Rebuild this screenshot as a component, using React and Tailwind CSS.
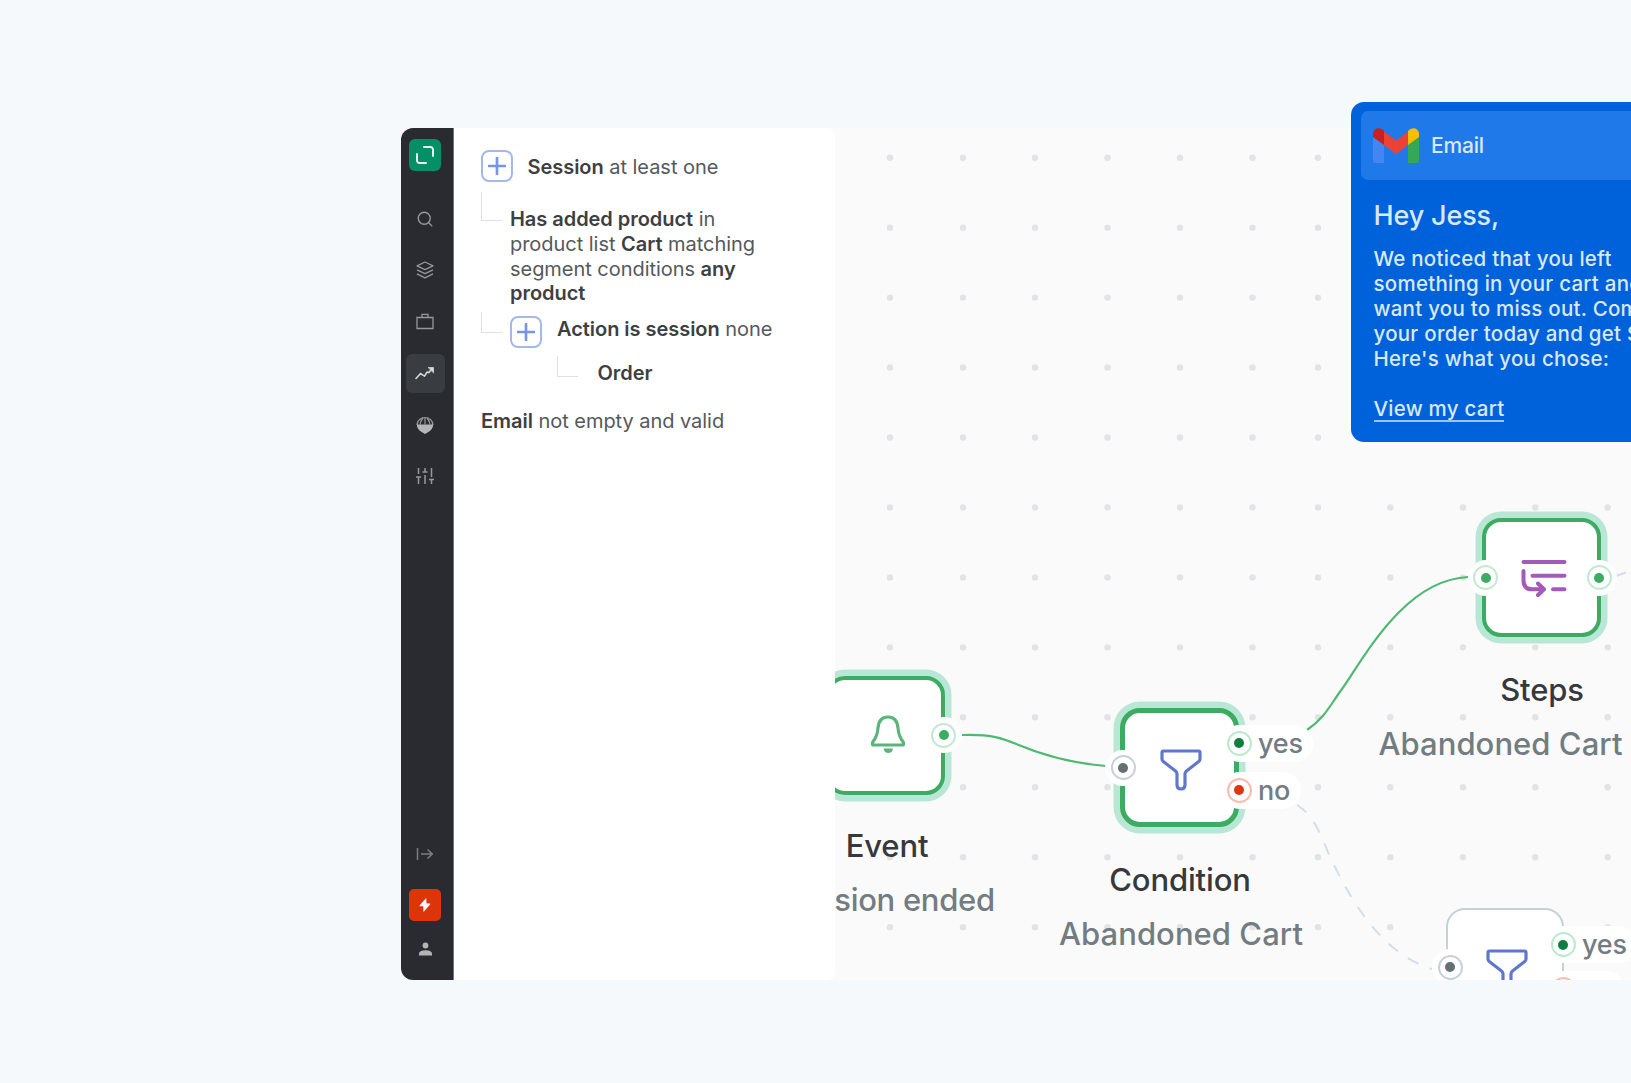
import { Search } from 'lucide-react';

const columns = [890, 963, 1035, 1107.5, 1180, 1252.5, 1318, 1390.3, 1463, 1535.3, 1607.7];
const rows = Array.from({ length: 12 }, (_, i) => 157.7 + i * 69.95);

const ports = {
  green: { ring: 'border-[#c3ead0]', dot: 'bg-[#3dab61]' },
  yes: { ring: 'border-[#b9ebcb]', dot: 'bg-[#0c8040]' },
  no: { ring: 'border-[#fdb9a9]', dot: 'bg-[#de3410]' },
  gray: { ring: 'border-[#c9d0d8]', dot: 'bg-[#667074]' },
};

function Port({ type, className }) {
  return (
    <div className={`absolute flex size-9 items-center justify-center rounded-full bg-white ${className}`}>
      <div className={`flex size-[25px] items-center justify-center rounded-full border-2 bg-white ${ports[type].ring}`}>
        <div className={`size-[10px] rounded-full ${ports[type].dot}`} />
      </div>
    </div>
  );
}

function Branch({ type, label, className }) {
  return (
    <div className={`absolute flex h-[37px] items-center rounded-full bg-white pl-[6px] ${className}`}>
      <div className={`flex size-[25px] shrink-0 items-center justify-center rounded-full border-2 bg-white ${ports[type].ring}`}>
        <div className={`size-[10px] rounded-full ${ports[type].dot}`} />
      </div>
      <span className="ml-[6.500px] text-[27px] leading-[37px] font-medium tracking-[-0.2px] text-[#737d81]">{label}</span>
    </div>
  );
}

function Label({ title, subtitle, className, titleClassName = '', subtitleClassName = 'tracking-[0.05px]' }) {
  return (
    <div className={`absolute w-[300px] text-center whitespace-nowrap ${className}`}>
      <div className={`text-[31px] leading-[54px] font-medium tracking-[-0.15px] text-[#37383b] ${titleClassName}`}>{title}</div>
      <div className={`text-[31px] leading-[54px] font-medium text-[#737d81] ${subtitleClassName}`}>{subtitle}</div>
    </div>
  );
}

function Funnel({ className }) {
  return (
    <svg className={className} width="42" height="42" viewBox="0 0 42 42" fill="none" stroke="#5f78cb" strokeWidth="3.2" strokeLinejoin="round">
      <path d="M3.5 2h35a1.5 1.5 0 0 1 1.500 1.500v6.500q0 1.500-1.300 2.600L26.500 22q-1.500 1.300-1.500 3v11q0 4-4 4t-4-4V25q0-1.700-1.500-3L3.300 12.600Q2 11.500 2 10V3.500A1.500 1.500 0 0 1 3.500 2z" />
    </svg>
  );
}

function PlusBox() {
  return (
    <div className="flex size-8 shrink-0 items-center justify-center rounded-[8px] border-2 border-[#a3b9ee]">
      <svg width="18" height="18" viewBox="0 0 18 18" stroke="#7695e2" strokeWidth="2.700" strokeLinecap="round">
        <path d="M9 1v16M1 9h16" />
      </svg>
    </div>
  );
}

function Sidebar() {
  const slot = 'flex h-[51.5px] items-center justify-center';
  return (
    <nav className="flex w-[52.500px] shrink-0 flex-col items-center border-r-[1.500px] border-[#77787b] bg-[#2a2b30] pr-[3px] text-[#96979a]">
      <div className="mt-[11px] flex size-8 items-center justify-center rounded-[6px] bg-[#058f66]">
        <svg width="18" height="18" viewBox="0 0 18 18" fill="none" stroke="#e6f5ef" strokeWidth="2" strokeLinecap="round">
          <path d="M8 1h6.500A2.500 2.500 0 0 1 17 3.500V10M1 8v6.500A2.500 2.500 0 0 0 3.500 17H10" />
        </svg>
      </div>
      <div className="mt-[22px] flex flex-col">
        <div className={slot}><Search size={18} strokeWidth={1.8} /></div>
        <div className={slot}>
          <svg width="18" height="18" viewBox="0 0 18 18" fill="none" stroke="currentColor" strokeWidth="1.300" strokeLinejoin="round">
            <path d="M9 1l8 3.800-8 3.800-8-3.800zM1 8.800l8 3.900 8-3.900M1 12.800l8 4 8-4" />
          </svg>
        </div>
        <div className={slot}>
          <svg width="18" height="18" viewBox="0 0 18 18" fill="none" stroke="currentColor" strokeWidth="1.300">
            <path d="M1 4.500h16v11H1zM6 4.500V1.300h6v3.200" />
          </svg>
        </div>
        <div className={slot}>
          <div className="flex size-[39px] items-center justify-center rounded-[6px] bg-[#393c41] text-[#d5d6d7]">
            <svg width="20" height="14" viewBox="0 0 20 14" fill="none" stroke="currentColor" strokeWidth="1.600" strokeLinecap="round" strokeLinejoin="round">
              <path d="M1 12.500l4.500-5 2 1.300 2 1.300 2.500-4 2 .4 3-4" />
              <path d="M13.500 1.500h5v5z" fill="currentColor" strokeWidth="0.800" />
            </svg>
          </div>
        </div>
        <div className={slot}>
          <svg width="18" height="18" viewBox="0 0 18 18" fill="none" stroke="#96979a" strokeWidth="1.200">
            <path d="M1 9a8 7.500 0 0 1 16 0" />
            <path d="M.8 8.600h16.400Q17 14 11.500 16.500L9 18l-2.500-1.500Q1 14 .8 8.600z" fill="#b4b5b7" stroke="none" />
            <path d="M4 8.600Q4.500 5 7 2M14 8.600Q13.500 5 11 2M9 1.500v7" />
          </svg>
        </div>
        <div className={slot}>
          <svg width="18" height="18" viewBox="0 0 18 18" fill="none" stroke="currentColor" strokeWidth="1.500">
            <path d="M2.500 1v6M2.500 10v7M0 10h5M9 1v4M9 8v9M6.500 5h5M15.500 1v9M15.500 13v4M13 12.500h5" />
          </svg>
        </div>
      </div>
      <div className="mt-auto mb-[7px] flex flex-col items-center">
        <svg width="18" height="14" viewBox="0 0 18 14" fill="none" stroke="#7c7d81" strokeWidth="1.500">
          <path d="M1.500 1v12M5 7h11M11.500 2.500L16.300 7l-4.800 4.500" />
        </svg>
        <div className="mt-[28.500px] flex size-8 items-center justify-center rounded-[5px] bg-[#de3409]">
          <svg width="12" height="14" viewBox="0 0 12 14" fill="#fff">
            <path d="M7.200 0L.5 7.600l.3.700h3.500L4.500 14 11.300 6.200 11 5.400H7.500z" />
          </svg>
        </div>
        <svg className="mt-[21px] mb-[17px]" width="13" height="14" viewBox="0 0 13 14" fill="#b3b4b6">
          <circle cx="6.500" cy="3.500" r="2.900" />
          <path d="M0 13.500v-1.700q0-3.600 6.500-3.600t6.500 3.600v1.700z" />
        </svg>
      </div>
    </nav>
  );
}

function SegmentPanel() {
  return (
    <section className="z-10 w-[381.500px] shrink-0 rounded-r-[8px] bg-white pt-[22.400px] pl-[27.500px] text-[20px] leading-[24.800px] tracking-[-0.04px] whitespace-nowrap text-[#55585c] [&_b]:font-semibold [&_b]:text-[#3d3f43]">
      <div className="flex items-start gap-[14.500px]">
        <PlusBox />
        <p className="mt-[5px]"><b>Session</b> at least one</p>
      </div>
      <div className="mt-[10px] flex items-start gap-[8px]">
        <div className="h-[29px] w-[21px] shrink-0 border-b border-l border-[#dfe0e2]" />
        <p className="mt-[14.600px]">
          <b>Has added product</b> in<br />
          product list <b>Cart</b> matching<br />
          segment conditions <b>any</b><br />
          <b>product</b>
        </p>
      </div>
      <div className="mt-[6px] flex items-start">
        <div className="h-[21px] w-[21px] shrink-0 border-b border-l border-[#dfe0e2]" />
        <div className="mt-[4px] ml-[8px]"><PlusBox /></div>
        <p className="mt-[5px] ml-[15px]"><b>Action is session</b> none</p>
      </div>
      <div className="mt-[8px] ml-[75.500px] flex items-start gap-[20px]">
        <div className="h-[21px] w-[21px] shrink-0 border-b border-l border-[#dfe0e2]" />
        <p className="mt-[4.600px]"><b>Order</b></p>
      </div>
      <p className="mt-[23.200px]"><b>Email</b> not empty and valid</p>
    </section>
  );
}

// Free canvas: the inner layer is shifted so nodes use page coordinates
function Canvas() {
  return (
    <section className="relative h-full flex-1 overflow-hidden bg-[#fafafa]">
      <div className="absolute -top-[128px] -left-[835px] h-[1083px] w-[1631px]">
        <svg className="absolute inset-0" width="1631" height="1083" fill="none">
          {rows.map(y => columns.map(x => <circle key={`${x}-${y}`} cx={x} cy={y} r="3.200" fill="#e1e3e4" />))}
          <path d="M962 735C992 734 1002 738 1020 745.500S1070 763 1106 766" stroke="#4fb873" strokeWidth="2.200" />
          <path d="M1307 730C1325 718 1330 705 1342 689C1365 656 1405 580 1468 577" stroke="#4fb873" strokeWidth="2.200" />
          <path d="M1297 805C1316 816 1322 840 1331 859C1350 898 1380 953 1432 969" stroke="#d7dee5" strokeWidth="2" strokeDasharray="12 12" />
          <path d="M1616 576l10-3.500" stroke="#d7dee5" strokeWidth="2" />
        </svg>

        {/* Event */}
        <div className="absolute top-[676px] left-[826px] size-[119px] rounded-[19px] border-4 border-[#3dab61] bg-white shadow-[0_0_0_6.500px_#b8e7d5]" />
        <svg className="absolute top-[714px] left-[870px]" width="37" height="40" viewBox="0 0 37 40" fill="none" stroke="#5ab57c" strokeWidth="3.200" strokeLinejoin="round">
          <path d="M2.500 28.500Q7.500 22 8 14Q9 3 18 3T28 14q.5 8 5.500 14.500v1.500q0 1-1 1h-29q-1 0-1-1z" />
          <path d="M13.500 34.500h9.500q-.7 4.500-4.700 4.500t-4.800-4.500z" fill="#5ab57c" stroke="none" />
        </svg>
        <Port type="green" className="top-[717px] left-[925.500px]" />
        <Label title="Event" subtitle="Session ended" className="top-[819px] left-[736px]" titleClassName="pl-[2px]" subtitleClassName="tracking-[-0.3px] pl-[3px]" />

        {/* Condition */}
        <div className="absolute top-[707.500px] left-[1119.500px] size-[119px] rounded-[20px] border-[5.500px] border-[#3dab61] bg-white shadow-[0_0_0_6.500px_#b8e7d5]" />
        <Funnel className="absolute top-[749px] left-[1160px]" />
        <Port type="gray" className="top-[749.500px] left-[1105px]" />
        <Branch type="yes" label="yes" className="top-[724.500px] left-[1220.500px] w-[92px]" />
        <Branch type="no" label="no" className="top-[771.500px] left-[1220.500px] w-[80px]" />
        <Label title="Condition" subtitle="Abandoned Cart" className="top-[852.500px] left-[1031px]" titleClassName="pr-[2px]" />

        {/* Steps */}
        <div className="absolute top-[518px] left-[1482px] size-[119px] rounded-[19px] border-4 border-[#3dab61] bg-white shadow-[0_0_0_6.500px_#b8e7d5]" />
        <svg className="absolute top-[558px] left-[1520px]" width="47" height="40" viewBox="0 0 47 40" fill="none" stroke="#a35bb8" strokeWidth="4" strokeLinecap="round" strokeLinejoin="round">
          <path d="M3.500 4h41M12.500 17.700h32M33 31.300h11.500M3.500 13v9.500q0 8.800 8.800 8.800H23M18 25.500l6 5.800-6 5.700" />
        </svg>
        <Port type="green" className="top-[559.700px] left-[1467.500px]" />
        <Port type="green" className="top-[559.700px] left-[1581px]" />
        <Label title="Steps" subtitle="Abandoned Cart" className="top-[663px] left-[1350.500px]" titleClassName="pl-[83px]" />

        {/* Inactive condition */}
        <div className="absolute top-[907.500px] left-[1445.500px] size-[118.500px] rounded-[19px] border-2 border-[#c4d2d6] bg-white" />
        <Funnel className="absolute top-[949px] left-[1486px]" />
        <Port type="gray" className="top-[949px] left-[1432px]" />
        <Branch type="yes" label="yes" className="top-[926px] left-[1544.500px] w-[92px]" />
        <Branch type="no" label="no" className="top-[971px] left-[1544.500px] w-[80px]" />
      </div>
    </section>
  );
}

function EmailCard() {
  return (
    <aside className="absolute top-[102px] left-[1351px] z-20 h-[340px] w-[340px] rounded-[13px] bg-[#0062da] pt-[9px] pl-[10px] font-medium whitespace-nowrap text-[#d9e8fa]">
      <div className="flex h-[69px] items-center rounded-l-[7px] bg-[#1f79e8] pl-[12px]">
        <svg width="46" height="35" viewBox="0 0 46 35">
          <path d="M0 7h11v28H2.500A2.500 2.500 0 0 1 0 32.500z" fill="#4485f4" />
          <path d="M35 7h11v25.500a2.500 2.500 0 0 1-2.500 2.500H35z" fill="#34a853" />
          <path d="M11 3.500l12 9 12-9v13.500L23 26 11 17z" fill="#ea4335" />
          <path d="M35 3l2-1.700C41-1.500 46 1 46 6v3l-11 8z" fill="#fbbc04" />
          <path d="M11 3L9 1.300C5-1.500 0 1 0 6v3l11 8z" fill="#c5221f" />
        </svg>
        <span className="ml-[12px] text-[21px] leading-[26px] tracking-[-0.2px]">Email</span>
      </div>
      <div className="pl-[12.500px]">
        <h2 className="mt-[19px] text-[27px] leading-[34px] tracking-[-0.150px]">Hey Jess,</h2>
        <p className="mt-[13px] text-[20.500px] leading-[25.100px] tracking-[0.250px]">
          We noticed that you left<br />
          something in your cart and didn't<br />
          want you to miss out. Complete<br />
          your order today and get $10 off.<br />
          Here's what you chose:
        </p>
        <a className="mt-[25.500px] inline-block border-b-2 border-[#9cc3f2] text-[20.500px] leading-[23px] tracking-[0.250px]">View my cart</a>
      </div>
    </aside>
  );
}

export default function App() {
  return (
    <main className="relative h-screen w-full overflow-hidden bg-[#f5f9fc] pt-[128px] pl-[401px] font-['Inter',sans-serif]">
      <div className="flex h-[852px] overflow-hidden rounded-l-[12px] bg-[#fafafa]">
        <Sidebar />
        <SegmentPanel />
        <Canvas />
      </div>
      <EmailCard />
    </main>
  );
}
